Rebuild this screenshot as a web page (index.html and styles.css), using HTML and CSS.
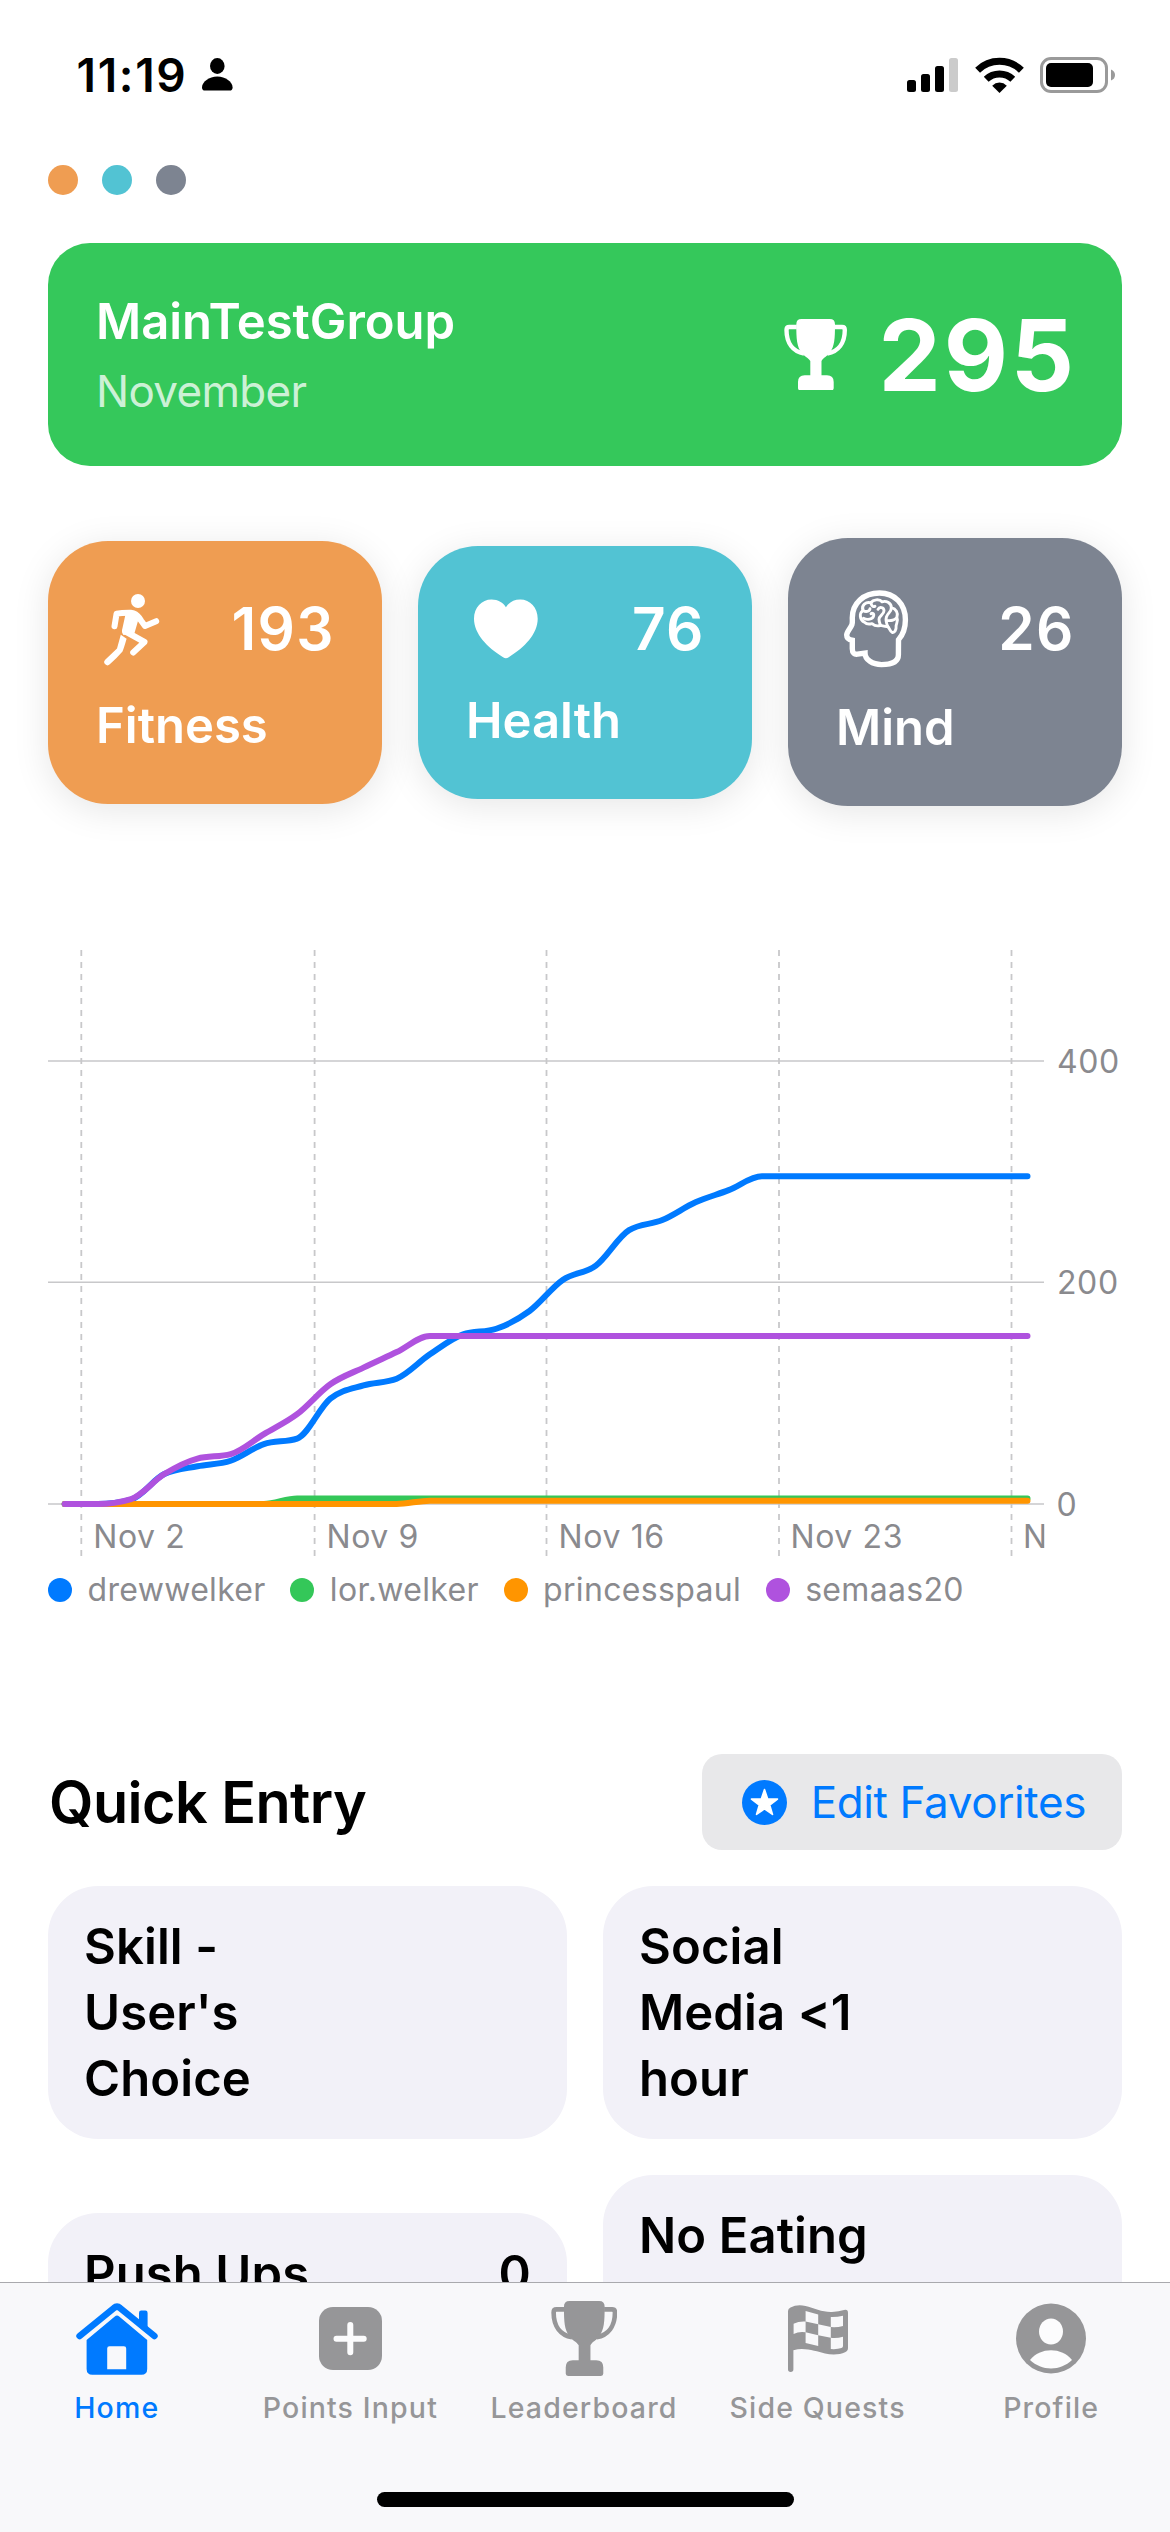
FILE: index.html
```
<!DOCTYPE html>
<html lang="en">
<head>
<meta charset="utf-8">
<title>Home</title>
<link rel="stylesheet" href="styles.css">
</head>
<body>
<svg class="defs" width="0" height="0" aria-hidden="true">
  <symbol id="trophy" viewBox="0 0 63.3 71.3">
    <path fill="currentColor" d="M17.5 0H45.8Q51 0 51 5.5C51 20 50.5 27 46 33.5C43 37.5 39.5 38.5 37.5 42V56.3H43Q49.7 56.3 49.7 63V69Q49.7 71.3 47.5 71.3H16.2Q14 71.3 14 69V63Q14 56.3 20.7 56.3H26.3V42C24 38.5 20.3 37.5 17.3 33.5C12.8 27 12.3 20 12.3 5.5Q12.3 0 17.5 0Z"/>
    <path fill="none" stroke="currentColor" stroke-width="4.4" d="M12.8 8H5.2Q2.5 8 2.5 11C2.5 24 9 32.5 20 34.5M50.5 8H58.1Q60.8 8 60.8 11C60.8 24 54.3 32.5 43.3 34.5"/>
  </symbol>
</svg>

<div class="screen">
  <div class="page">
    <header class="status">
      <div class="clock">
        <span>11:19</span>
        <svg width="31" height="33" viewBox="0 0 31 33"><ellipse cx="15.3" cy="8" rx="7.3" ry="7.9"/><path d="M15.3 18.6C23.5 18.6 30.6 24 30.6 29.5Q30.6 32.6 27.6 32.6H3Q0 32.6 0 29.5C0 24 7 18.6 15.3 18.6Z"/></svg>
      </div>
      <div class="signals">
        <svg width="51" height="34" viewBox="0 0 51 34"><rect y="22" width="9" height="12" rx="2.5"/><rect x="14" y="16" width="9" height="18" rx="2.5"/><rect x="28" y="8" width="9" height="26" rx="2.5"/><rect x="42" width="9" height="34" rx="2.5" fill="#cbcbcb"/></svg>
        <svg width="49" height="36" viewBox="0 0 49 36"><g fill="none" stroke="#000" stroke-width="7"><path d="M2.6 13.2A31.5 31.5 0 0 1 46.4 13.2"/><path d="M11.2 22.2A19.3 19.3 0 0 1 37.8 22.2"/></g><path d="M24.5 36L17.2 28.7Q20.3 25.6 24.5 25.6T31.8 28.7Z"/></svg>
        <svg width="76" height="36" viewBox="0 0 76 36"><rect x="1.5" y="1.5" width="65" height="33" rx="9.5" fill="none" stroke="#9a9a9a" stroke-width="3"/><rect x="6" y="6" width="47" height="24" rx="5"/><path d="M71 12.5Q75 14 75 18T71 23.5Z" fill="#9a9a9a"/></svg>
      </div>
    </header>

    <div class="pager"><i class="fitness"></i><i class="health"></i><i class="mind"></i></div>

    <section class="group">
      <div>
        <h1>MainTestGroup</h1>
        <p>November</p>
      </div>
      <div class="score">
        <svg width="63.3" height="71.3"><use href="#trophy"/></svg>
        <strong>295</strong>
      </div>
    </section>

    <section class="categories">
      <article class="category fitness">
        <div class="category-top">
          <svg width="72" height="79" viewBox="0 0 72 79">
            <g transform="translate(8 5)" fill="none" stroke="#fff" stroke-width="6" stroke-linecap="round" stroke-linejoin="round">
              <circle cx="34" cy="7" r="7" fill="#fff" stroke="none"/>
              <path d="M10.5 32.2L12.6 19.6Q18 18.7 27 18.8"/>
              <path d="M29.5 19.3Q34 21 37 26.5L41 32L52.2 27.2"/>
              <path d="M22 18L31 17.5Q35 22 34 27L30.5 39L19.5 41Q17 38 18.5 34Z" fill="#fff" stroke="none"/>
              <path d="M21.5 37.5L40.5 48L29.2 58.5"/>
              <path d="M16.8 40.8L22.6 44.8Q20 54 18.5 57.5Q12 65 5.8 70.3A3.2 3.2 0 0 1 1.2 65.8L13 54.5Z" fill="#fff" stroke="none"/>
            </g>
          </svg>
          <strong>193</strong>
        </div>
        <h2>Fitness</h2>
      </article>
      <article class="category health">
        <div class="category-top">
          <svg width="80" height="69" viewBox="0 0 80 69"><path transform="translate(7.7 5.3)" fill="#fff" d="M32.2 8C35 3.5 40 .3 46.5 .3C56.5 .3 64 8.5 64 19.5C64 34.5 51 48 35 58Q32.2 59.8 29.4 58C13.5 48 .3 34.5 .3 19.5C.3 8.5 8 .3 17.8 .3C24.5 .3 29.5 3.5 32.2 8Z"/></svg>
          <strong>76</strong>
        </div>
        <h2>Health</h2>
      </article>
      <article class="category mind">
        <div class="category-top">
          <svg width="80" height="84" viewBox="0 0 80 84">
            <g transform="translate(7.5 3.8)" fill="none" stroke="#fff" stroke-linejoin="round" stroke-linecap="round">
              <path stroke-width="5.4" stroke-linejoin="miter" d="M55 50C59.5 45 61.9 39 61.9 30C61.9 14 51 3.2 36 3.2C20 3.2 8.8 13.5 8.8 28C8.8 31 9.2 33 8.4 35C7 38.5 3.2 42 3.2 45.2C3.2 48.5 5 50 8.8 50.5V59C8.8 63.5 11 64.8 14 64.3L21.5 63.2C21.5 70 29 74.8 38 74.8C49 74.8 54.9 72 54.9 65Z"/>
              <g stroke-width="2.9">
                <path d="M21 32.5C16 30 15.5 23.5 19.5 20.5C17.5 15.5 22.5 11.5 27.5 13C29.5 9.5 36 9 38.5 12C43 10.5 48 13.5 47.8 17.8C52.5 19 55 23 53.4 27.5C55 31 53 33 52.6 36C53 40.5 51 43.2 48.5 42.5C46.5 41.5 46 38.5 44.5 37C41.5 36.5 39 36 37 35.5C33 37 30.5 35.5 28.5 33.8C26 34.5 23 34.5 21 32.5Z"/>
                <path d="M27.5 13.5C28 16 30 17.5 31.5 16.5M19.5 20.5C22 22.5 26 22 26.5 19M20 28.5C24 30.5 29 29.5 30 26.5C31 23.5 28.5 23 27.5 24M34.5 19.5C36 16.5 40.5 17.5 40.5 21C40.5 25 35.5 25.5 35.5 29.5C35.5 32 36.5 34 37 35.5M47.8 17.8C48 22 44.5 23 43 27C42 30 42.5 33 44.5 37M43.5 30.5C47 31.5 51.5 30 52.5 28.5"/>
              </g>
            </g>
          </svg>
          <strong>26</strong>
        </div>
        <h2>Mind</h2>
      </article>
    </section>

    <section class="chart">
      <svg width="1074" height="626" viewBox="48 940 1074 626">
        <defs><clipPath id="plot"><rect x="48" y="940" width="996.5" height="626"/></clipPath></defs>
        <g class="rows"><path d="M48 1061H1044M48 1282.3H1044M48 1504H1044"/></g>
        <g class="columns"><path d="M81.3 950V1556M314.6 950V1556M546.5 950V1556M779 950V1556M1011.5 950V1556"/></g>
        <g id="lines" class="lines"></g>
        <g class="ticks">
          <text x="1057" y="1072.7">400</text>
          <text x="1057" y="1294.2">200</text>
          <text x="1056.5" y="1516">0</text>
          <text x="93.2" y="1547.5">Nov 2</text>
          <text x="326.5" y="1547.5">Nov 9</text>
          <text x="558.6" y="1547.5">Nov 16</text>
          <text x="790.5" y="1547.5">Nov 23</text>
          <text x="1023" y="1547.5" clip-path="url(#plot)">N</text>
        </g>
      </svg>
      <ul class="legend">
        <li><i class="c-blue"></i>drewwelker</li>
        <li><i class="c-green"></i>lor.welker</li>
        <li><i class="c-orange"></i>princesspaul</li>
        <li><i class="c-purple"></i>semaas20</li>
      </ul>
    </section>

    <section class="quick">
      <div class="quick-head">
        <h2>Quick Entry</h2>
        <button class="edit" type="button">
          <svg width="45" height="45" viewBox="0 0 45 45"><circle cx="22.5" cy="22.5" r="22.5" fill="#007aff"/><path fill="#fff" stroke="#fff" stroke-width="1.6" stroke-linejoin="round" d="M22.5 9.6L25.7 18.9L35.5 19.1L27.7 25L30.5 34.4L22.5 28.8L14.5 34.4L17.3 25L9.5 19.1L19.3 18.9Z"/></svg>
          <span>Edit Favorites</span>
        </button>
      </div>
      <div class="entries">
        <article class="entry"><h3>Skill - User's Choice</h3></article>
        <article class="entry"><h3>Social Media &lt;1 hour</h3></article>
        <article class="entry short"><h3>Push Ups</h3><span>0</span></article>
        <article class="entry"><h3>No Eating</h3></article>
      </div>
    </section>
  </div>

  <nav class="tabbar">
    <div class="tabs">
      <a class="tab active">
        <svg width="82" height="75" viewBox="0 0 82 75"><path fill="none" stroke="currentColor" stroke-width="6.6" stroke-linecap="round" stroke-linejoin="round" d="M3.6 35L38 7Q41 4.2 44 7L78.4 35"/><path fill="currentColor" d="M63 26V12Q63 9.6 65.2 9.6H69.4Q71.6 9.6 71.6 12V33Z"/><path fill="currentColor" fill-rule="evenodd" d="M38.8 15.5Q41 13.6 43.2 15.5L71.2 39V68Q71.2 73.8 65.4 73.8H16.4Q10.6 73.8 10.6 68V39ZM33.5 45.2Q31.2 45.2 31.2 47.5V68.2H50.2V47.5Q50.2 45.2 47.9 45.2Z"/></svg>
        <span>Home</span>
      </a>
      <a class="tab">
        <svg width="63" height="75" viewBox="0 0 63 75"><rect y="6" width="63" height="63" rx="14" fill="currentColor"/><path d="M17.5 37.7H44.7M31.3 24.1V51.3" stroke="#fcfcfd" stroke-width="6" stroke-linecap="round"/></svg>
        <span>Points Input</span>
      </a>
      <a class="tab">
        <svg width="66.6" height="75"><use href="#trophy"/></svg>
        <span>Leaderboard</span>
      </a>
      <a class="tab">
        <svg width="60" height="75" viewBox="0 -4 60 75"><path fill="currentColor" fill-rule="evenodd" d="M0 6Q0 3.5 2.5 2.5Q9-.8 17.5 1C26 3 35 7.5 44 7Q51 6.6 56 5Q60 3.8 60 8V43Q60 46 57 47.3C52 49.8 44 50.2 37 48.5C28 46.5 17 42 5.4 45.2V64.3A2.7 2.7 0 0 1 0 64.3ZM5.6 18.7V28.9Q11 26.3 17.6 27.3V16.5Q11 16 5.6 18.7ZM17.6 6V16.5L30.2 19.3V9.5ZM30.2 19.3V30.3L42.8 32.7V22ZM17.6 27.3V38L30.2 41V30.3ZM42.8 12V22Q49 22.6 55 20.9V10.7Q49 12.2 42.8 12ZM42.8 32.7V44Q49 44.5 53.5 43Q55 42.4 55 41V31.7Q49 33.4 42.8 32.7Z"/></svg>
        <span>Side Quests</span>
      </a>
      <a class="tab">
        <svg width="70" height="75" viewBox="0 -2.5 70 75"><circle cx="35" cy="35" r="35" fill="currentColor"/><ellipse cx="35" cy="28" rx="12" ry="13" fill="#fcfcfd"/><path fill="#fcfcfd" d="M14 56.5C19 50 27 46.7 35 46.7S51 50 56 56.5C50 62 43 65 35 65S20 62 14 56.5Z"/></svg>
        <span>Profile</span>
      </a>
    </div>
    <div class="indicator"></div>
  </nav>
</div>
<script src="chart.js"></script>
</body>
</html>
```
FILE: styles.css
```
* { box-sizing: border-box; margin: 0; padding: 0; }
body { width: 1170px; height: 2532px; overflow: hidden; background: #fff; color: #000; font-family: "Inter", "Liberation Sans", sans-serif; }
svg { display: block; flex: none; }
.defs { position: absolute; }
.screen { display: flex; flex-direction: column; height: 2532px; }
.page { height: 2282px; overflow: hidden; padding: 0 48px; }

.status { display: flex; justify-content: space-between; align-items: center; height: 149px; padding: 0 7px 0 28.5px; }
.clock { display: flex; align-items: center; gap: 14.5px; font-size: 46px; font-weight: 600; line-height: 60px; letter-spacing: 1.7px; }
.signals { display: flex; align-items: center; gap: 16.5px; margin-right: -1px; }

.pager { display: flex; gap: 24px; padding-top: 16px; }
.pager i { width: 30px; height: 30px; border-radius: 50%; }
.fitness { background: #ef9d52; }
.health { background: #52c3d3; }
.mind { background: #7d8491; }

.group { display: flex; justify-content: space-between; align-items: center; height: 223px; margin-top: 48px; padding: 0 48px; border-radius: 42px; background: #35c85b; color: #fff; }
.group h1 { font-size: 49px; font-weight: 600; line-height: 60px; letter-spacing: -.07px; }
.group p { margin-top: 12px; font-size: 44px; line-height: 54px; letter-spacing: -.7px; color: rgba(255,255,255,.77); }
.score { display: flex; align-items: center; gap: 31.5px; }
.score strong { font-size: 99px; line-height: 120px; font-weight: 700; letter-spacing: 2.8px; margin-right: -2.8px; }

.categories { display: grid; grid-template-columns: repeat(3, 1fr); gap: 36px; align-items: center; margin-top: 72px; height: 268px; }
.category { padding: 48px; border-radius: 60px; color: #fff; box-shadow: 0 6px 36px rgba(0,0,0,.1); }
.category-top { display: flex; justify-content: space-between; align-items: center; margin-bottom: 28px; }
.category strong { padding-top: 1px; font-size: 58.5px; line-height: 66px; font-weight: 600; letter-spacing: 1.2px; margin-right: -.6px; }
.category h2 { font-size: 49px; line-height: 60px; font-weight: 600; }

.chart { margin-top: 134px; }
.rows path { fill: none; stroke: #c8c8ca; stroke-width: 1.6; }
.columns path { fill: none; stroke: #c8c8ca; stroke-width: 1.8; stroke-dasharray: 6 6; }
.lines path { fill: none; stroke-width: 6; stroke-linecap: round; stroke-linejoin: round; }
.ticks text { font-size: 32px; fill: #8a8a8e; letter-spacing: .6px; }
.legend { display: flex; gap: 24.6px; margin-top: 4px; list-style: none; color: #8a8a8e; font-size: 32px; line-height: 40px; letter-spacing: .33px; }
.legend li { display: flex; align-items: center; gap: 15.5px; }
.legend i { width: 24px; height: 24px; border-radius: 50%; }
.c-blue { background: #007aff; }
.c-green { background: #34c759; }
.c-orange { background: #ff9500; }
.c-purple { background: #af52de; }

.quick { margin-top: 144px; }
.quick-head { display: flex; justify-content: space-between; align-items: center; height: 96px; }
.quick-head h2 { font-size: 57.5px; font-weight: 600; letter-spacing: -.54px; line-height: 72px; padding-left: 1px; }
.edit { display: flex; align-items: center; justify-content: space-between; width: 420px; height: 96px; padding: 0 36px 0 40px; border: 0; border-radius: 20px; background: #e8e8ea; font: 400 44px/54px "Inter", sans-serif; letter-spacing: -.39px; color: #007aff; }
.entries { display: grid; grid-template-columns: 1fr 1fr; gap: 36px; align-items: center; margin-top: 36px; }
.entry { display: flex; justify-content: space-between; height: 253px; padding: 28px 36px; border-radius: 50px; background: #f2f1f8; font-size: 49px; font-weight: 600; line-height: 66px; letter-spacing: .1px; }
.entry.short { height: 177px; }
.entry h3 { max-width: 240px; font: inherit; }

.tabbar { height: 250px; border-top: 1px solid #a9a9ad; background: #f8f8fa; }
.tabs { display: grid; grid-template-columns: repeat(5, 1fr); padding: 18px 2px 0 0; }
.tab { display: flex; flex-direction: column; align-items: center; gap: 14px; color: #969698; font-size: 28.5px; font-weight: 500; line-height: 36px; letter-spacing: 1.15px; }
.tab.active { color: #007aff; }
.indicator { width: 417px; height: 15px; margin: 66px auto 0; border-radius: 8px; background: #000; }
```
FILE: chart.js
```
// Cumulative points per day, one value a day for the month
const flat = (values) => values.concat(Array(30 - values.length).fill(values[values.length - 1]));
const series = [
  { color: "#007aff", values: flat([0, 0, 4, 27, 34, 39, 54, 59, 95, 107, 113, 135, 153, 158, 174, 202, 215, 247, 256, 272, 283, 295.5]) },
  { color: "#34c759", values: flat([0, 0, 0, 0, 0, 0, 0, 5]) },
  { color: "#ff9500", values: flat([0, 0, 0, 0, 0, 0, 0, 0, 0, 0, 0, 3]) },
  { color: "#af52de", values: flat([0, 0, 4.5, 27, 41, 45, 63, 81, 108, 123, 137, 151.5]) }
];
const STEP = 33.2, LEFT = 64.7, BASE = 1504, UNIT = 1.109;

// Monotone cubic interpolation on an even step
function curve(values) {
  const y = values.map((v) => BASE - v * UNIT);
  const d = y.slice(1).map((v, i) => (v - y[i]) / STEP);
  const m = y.map((_, i) => {
    if (i === 0 || i === y.length - 1) return 0;
    const a = d[i - 1], b = d[i];
    return a * b <= 0 ? 0 : Math.sign(a) * Math.min(Math.abs(a), Math.abs(b), Math.abs(a + b) / 4) * 2;
  });
  let path = `M${LEFT} ${y[0]}`;
  for (let i = 1; i < y.length; i++) {
    const x0 = LEFT + (i - 1) * STEP, x1 = x0 + STEP, h = STEP / 3;
    path += `C${x0 + h} ${y[i - 1] + m[i - 1] * h} ${x1 - h} ${y[i] - m[i] * h} ${x1} ${y[i]}`;
  }
  return path;
}

const layer = document.getElementById("lines");
for (const { color, values } of series) {
  const p = document.createElementNS("http://www.w3.org/2000/svg", "path");
  p.setAttribute("d", curve(values));
  p.setAttribute("stroke", color);
  layer.appendChild(p);
}
```
